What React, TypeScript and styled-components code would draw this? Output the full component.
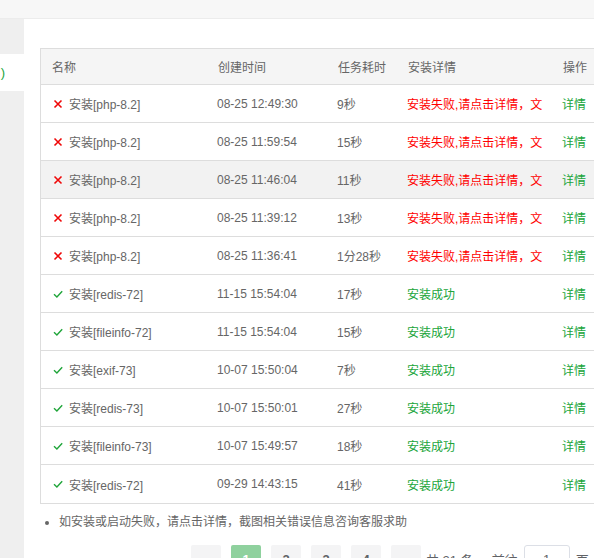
import React from "react";
import styled, { createGlobalStyle } from "styled-components";

const Global = createGlobalStyle`
  html, body { margin: 0; padding: 0; background: #fff; overflow: hidden; }
  body { font-family: "Liberation Sans", "Noto Sans CJK SC", sans-serif; font-size: 12px; color: #666; }
  * { box-sizing: border-box; }
`;

const Page = styled.div`
  width: 594px;
  height: 558px;
  display: flex;
  flex-direction: column;
  overflow: hidden;
`;

const TopBar = styled.div`
  height: 19px;
  flex: none;
  background: #f7f7f7;
  border-bottom: 1px solid #ececec;
`;

const Body = styled.div`
  flex: 1;
  display: flex;
  min-height: 0;
`;

const Sidebar = styled.div`
  width: 24px;
  flex: none;
  display: flex;
  flex-direction: column;
  background: #efefef;
`;

const SideItem = styled.div<{ $active?: boolean; $h: number }>`
  height: ${(p) => p.$h}px;
  flex: none;
  background: ${(p) => (p.$active ? "#fff" : "#efefef")};
  color: #20a53a;
  font-size: 13px;
  display: flex;
  align-items: center;
  justify-content: flex-end;
  overflow: hidden;
  white-space: nowrap;
  padding-right: 19px;
`;

const SideLabel = styled.span`
  flex: none;
`;

const Main = styled.div`
  flex: 1;
  min-width: 0;
  padding: 29px 0 0 16px;
  overflow: hidden;
`;

const Table = styled.div`
  width: 600px;
  border: 1px solid #ddd;
  border-right: none;
`;

const cols = "166px 120px 70px 155px 1fr";

const HeadRow = styled.div`
  display: grid;
  grid-template-columns: ${cols};
  height: 36px;
  background: #f5f5f5;
  border-bottom: 1px solid #ddd;
`;

const Row = styled.div<{ $hover?: boolean; $last?: boolean }>`
  display: grid;
  grid-template-columns: ${cols};
  height: 38px;
  background: ${(p) => (p.$hover ? "#f2f2f2" : "#fff")};
  border-bottom: ${(p) => (p.$last ? "none" : "1px solid #ddd")};
`;

const Cell = styled.div<{ $color?: string }>`
  padding: 0 10px;
  display: flex;
  align-items: center;
  min-width: 0;
  white-space: nowrap;
  color: ${(p) => p.$color || "#666"};
  font-size: 12px;
`;

const Clip = styled.span`
  display: block;
  overflow: hidden;
  min-width: 0;
`;

const HeadCell = styled(Cell)`
  padding-left: 11px;
`;

const NameCell = styled(Cell)`
  padding-left: 12px;
  gap: 6px;
`;

const Icon = styled.svg`
  width: 10px;
  height: 10px;
  flex: none;
`;

const Note = styled.ul`
  margin: 8px 0 0 0;
  padding: 0 0 0 19px;
  font-size: 12px;
  color: #666;
  li::marker { color: #666; }
`;

const Pager = styled.div`
  display: flex;
  align-items: center;
  margin: 16px 0 0 151px;
  gap: 10px;
  white-space: nowrap;
`;

const PageBtn = styled.div<{ $active?: boolean; $disabled?: boolean }>`
  width: 30px;
  height: 28px;
  flex: none;
  border-radius: 2px;
  background: ${(p) => (p.$active ? "#8fd19e" : "#f4f4f5")};
  color: ${(p) => (p.$active ? "#fff" : p.$disabled ? "#c0c4cc" : "#606266")};
  font-weight: bold;
  font-size: 13px;
  display: flex;
  align-items: center;
  justify-content: center;
`;

const Total = styled.span`
  margin-left: -5px;
  font-size: 13px;
  color: #606266;
`;

const Jumper = styled.span`
  margin-left: 8px;
  font-size: 13px;
  color: #606266;
  display: flex;
  align-items: center;
  gap: 6px;
`;

const JumpInput = styled.div`
  width: 46px;
  height: 28px;
  border: 1px solid #dcdfe6;
  border-radius: 3px;
  display: flex;
  align-items: center;
  justify-content: center;
  color: #606266;
`;

const Cross = () => (
  <Icon viewBox="0 0 10 10">
    <path d="M1.5 1.5 L8.5 8.5 M8.5 1.5 L1.5 8.5" stroke="#ef0808" strokeWidth="1.6" fill="none" />
  </Icon>
);

const Check = () => (
  <Icon viewBox="0 0 10 10">
    <path d="M1 5.2 L3.9 8 L9.2 2.2" stroke="#20a53a" strokeWidth="1.4" fill="none" />
  </Icon>
);

type Item = { ok: boolean; name: string; time: string; dur: string };

const rows: Item[] = [
  { ok: false, name: "安装[php-8.2]", time: "08-25 12:49:30", dur: "9秒" },
  { ok: false, name: "安装[php-8.2]", time: "08-25 11:59:54", dur: "15秒" },
  { ok: false, name: "安装[php-8.2]", time: "08-25 11:46:04", dur: "11秒" },
  { ok: false, name: "安装[php-8.2]", time: "08-25 11:39:12", dur: "13秒" },
  { ok: false, name: "安装[php-8.2]", time: "08-25 11:36:41", dur: "1分28秒" },
  { ok: true, name: "安装[redis-72]", time: "11-15 15:54:04", dur: "17秒" },
  { ok: true, name: "安装[fileinfo-72]", time: "11-15 15:54:04", dur: "15秒" },
  { ok: true, name: "安装[exif-73]", time: "10-07 15:50:04", dur: "7秒" },
  { ok: true, name: "安装[redis-73]", time: "10-07 15:50:01", dur: "27秒" },
  { ok: true, name: "安装[fileinfo-73]", time: "10-07 15:49:57", dur: "18秒" },
  { ok: true, name: "安装[redis-72]", time: "09-29 14:43:15", dur: "41秒" },
];

export default function App() {
  return (
    <Page>
      <Global />
      <TopBar />
      <Body>
        <Sidebar>
          <SideItem $h={35} />
          <SideItem $h={37} $active>
            <SideLabel>)</SideLabel>
          </SideItem>
        </Sidebar>
        <Main>
          <Table>
            <HeadRow>
              <HeadCell>名称</HeadCell>
              <HeadCell>创建时间</HeadCell>
              <HeadCell>任务耗时</HeadCell>
              <HeadCell>安装详情</HeadCell>
              <HeadCell>操作</HeadCell>
            </HeadRow>
            {rows.map((r, i) => (
              <Row key={i} $hover={i === 2} $last={i === rows.length - 1}>
                <NameCell>
                  {r.ok ? <Check /> : <Cross />}
                  {r.name}
                </NameCell>
                <Cell>{r.time}</Cell>
                <Cell>{r.dur}</Cell>
                <Cell $color={r.ok ? "#20a53a" : "#ff0000"}>
                  <Clip>{r.ok ? "安装成功" : "安装失败,请点击详情，文件日志"}</Clip>
                </Cell>
                <Cell $color="#20a53a">详情</Cell>
              </Row>
            ))}
          </Table>
          <Note>
            <li>如安装或启动失败，请点击详情，截图相关错误信息咨询客服求助</li>
          </Note>
          <Pager>
            <PageBtn $disabled>‹</PageBtn>
            <PageBtn $active>1</PageBtn>
            <PageBtn>2</PageBtn>
            <PageBtn>3</PageBtn>
            <PageBtn>4</PageBtn>
            <PageBtn>›</PageBtn>
            <Total>共 21 条</Total>
            <Jumper>
              前往<JumpInput>1</JumpInput>页
            </Jumper>
          </Pager>
        </Main>
      </Body>
    </Page>
  );
}
